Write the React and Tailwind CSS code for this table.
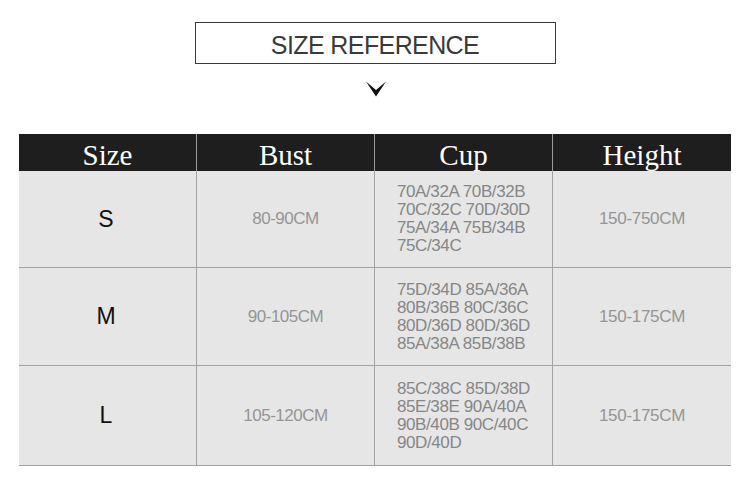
import React from 'react';

const rows = [
    {
        size: 'S',
        bust: '80-90CM',
        cup: ['70A/32A 70B/32B', '70C/32C 70D/30D', '75A/34A 75B/34B', '75C/34C'],
        height: '150-750CM',
        h: 'h-[97px]',
    },
    {
        size: 'M',
        bust: '90-105CM',
        cup: ['75D/34D 85A/36A', '80B/36B 80C/36C', '80D/36D 80D/36D', '85A/38A 85B/38B'],
        height: '150-175CM',
        h: 'h-[98px]',
    },
    {
        size: 'L',
        bust: '105-120CM',
        cup: ['85C/38C 85D/38D', '85E/38E 90A/40A', '90B/40B 90C/40C', '90D/40D'],
        height: '150-175CM',
        h: 'h-[100px]',
    },
];

const headers = ['Size', 'Bust', 'Cup', 'Height'];

const App = () => {
    return (
        <div className="w-[750px] h-[503px] bg-white font-['Liberation_Sans',Arial,sans-serif] overflow-hidden">
            {/* Title */}
            <div className="pt-[22px] flex justify-center">
                <div className="w-[361px] h-[42px] border border-[#3a3a3a] flex items-center justify-center pt-[5px]">
                    <span className="text-[25px] font-light text-[#3a3a3a] tracking-[-0.6px]">SIZE REFERENCE</span>
                </div>
            </div>

            {/* Chevron */}
            <div className="flex justify-center pt-[17px] pl-[2px]">
                <svg width="20" height="16" viewBox="0 0 20 16">
                    <polygon points="0,0.5 10,9 20,0.5 10,15.5" fill="#111" />
                </svg>
            </div>

            {/* Table */}
            <div className="mx-[19px] mt-[37px]">
                <div className="grid grid-cols-4 h-[37px] bg-[#1e1e1e]">
                    {headers.map((h, i) => (
                        <div
                            key={h}
                            className={`flex items-center justify-center pb-[3px] text-white text-[29px] font-['Liberation_Serif','Times_New_Roman',serif] ${i < 3 ? 'border-r border-[#9a9a9a]' : ''}`}
                        >
                            {h}
                        </div>
                    ))}
                </div>

                {rows.map((r) => (
                    <div key={r.size} className={`grid grid-cols-4 bg-[#e6e6e6] border-b border-[#a3a3a3] ${r.h}`}>
                        <div className="flex items-center justify-center border-r border-[#a3a3a3] text-[23px] text-[#111] pr-[3px]">
                            {r.size}
                        </div>
                        <div className="flex items-center justify-center border-r border-[#a3a3a3] text-[17px] tracking-[-0.5px] text-[#959595]">
                            {r.bust}
                        </div>
                        <div className="flex flex-col justify-center border-r border-[#a3a3a3] pl-[22px] text-[17px] leading-[18px] tracking-[-0.4px] text-[#868686]">
                            {r.cup.map((line) => (
                                <div key={line}>{line}</div>
                            ))}
                        </div>
                        <div className="flex items-center justify-center text-[17px] tracking-[-0.3px] text-[#959595]">
                            {r.height}
                        </div>
                    </div>
                ))}
            </div>
        </div>
    );
};

export default App;
